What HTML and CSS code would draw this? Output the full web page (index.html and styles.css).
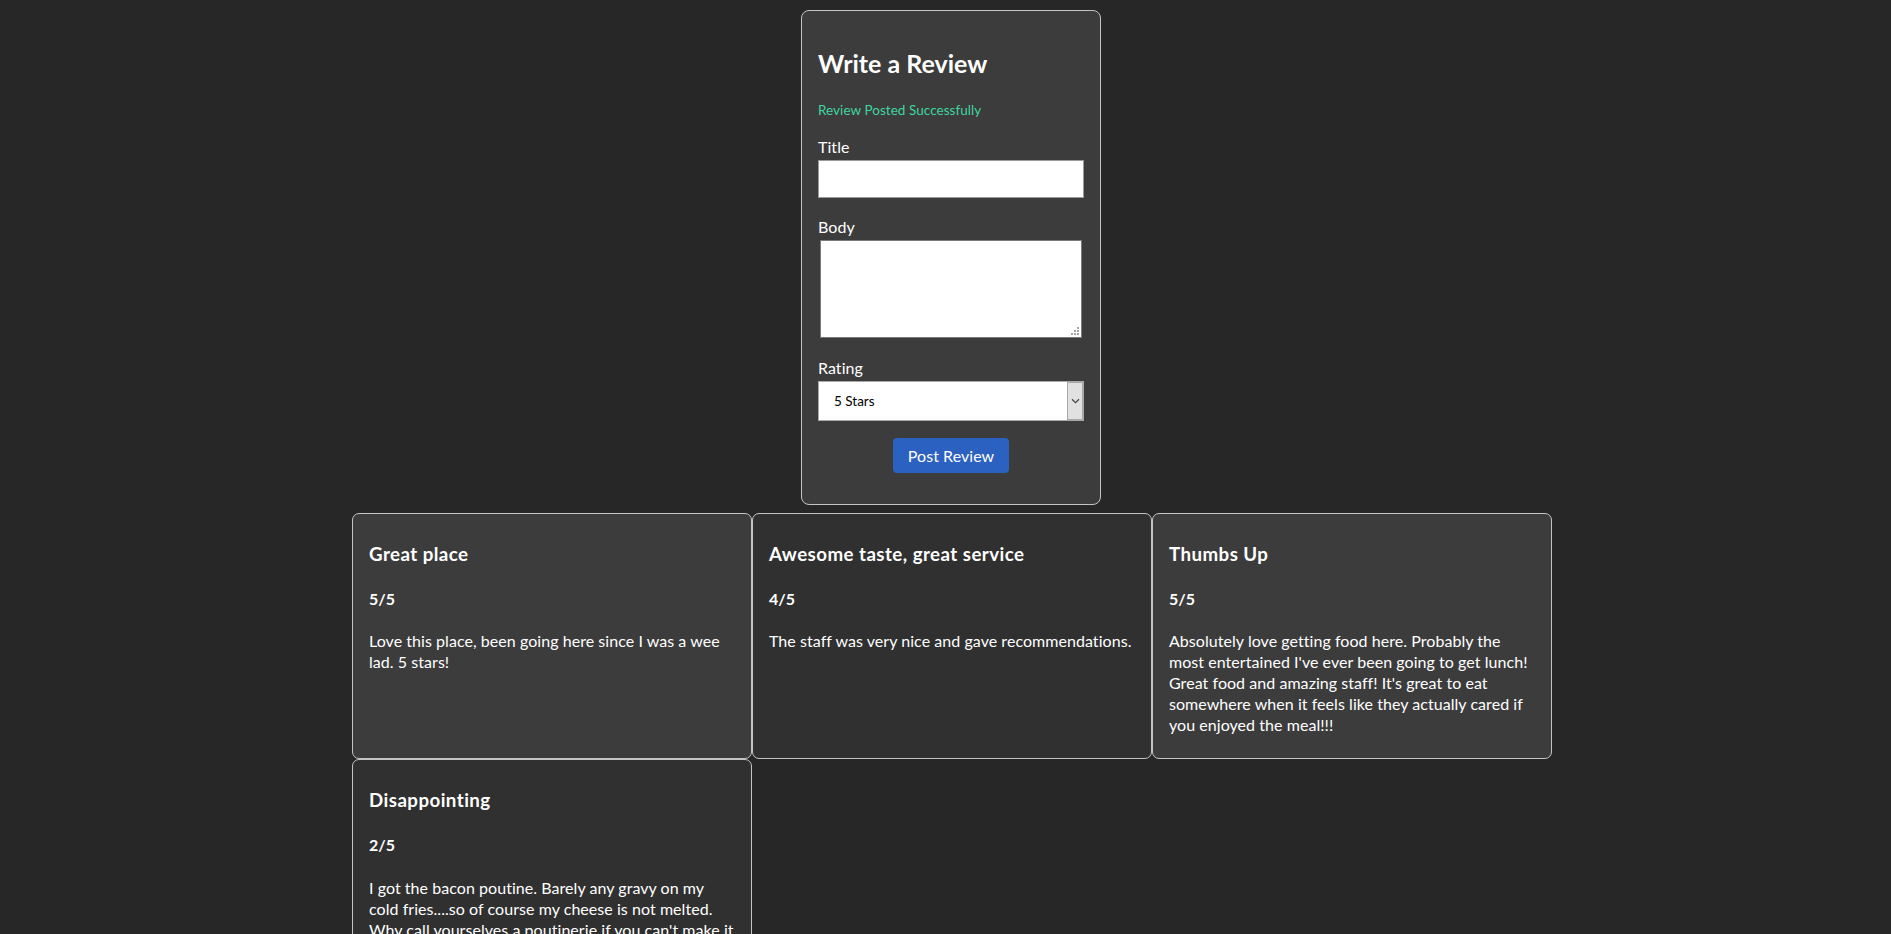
FILE: index.html
```html
<!DOCTYPE html>
<html lang="en">
<head>
<meta charset="utf-8">
<title>Reviews</title>
<link rel="stylesheet" href="styles.css">
</head>
<body>
<div class="page">
  <section class="review-form-card">
    <h2 class="form-title">Write a Review</h2>
    <p class="status">Review Posted Successfully</p>
    <form class="review-form">
      <label class="field-label" for="title">Title</label>
      <input class="text-input" id="title" type="text">
      <label class="field-label" for="body">Body</label>
      <div class="area-wrap">
        <textarea class="text-area" id="body"></textarea>
        <span class="grip"><svg width="8" height="8" viewBox="0 0 8 8"><rect x="6" y="0" width="2" height="2"/><rect x="3" y="3" width="2" height="2"/><rect x="6" y="3" width="2" height="2"/><rect x="0" y="6" width="2" height="2"/><rect x="3" y="6" width="2" height="2"/><rect x="6" y="6" width="2" height="2"/></svg></span>
      </div>
      <label class="field-label" for="rating">Rating</label>
      <div class="select-wrap">
        <select class="select" id="rating">
          <option>5 Stars</option>
          <option>4 Stars</option>
          <option>3 Stars</option>
          <option>2 Stars</option>
          <option>1 Star</option>
        </select>
        <span class="select-btn"><svg width="9" height="6" viewBox="0 0 9 6"><path d="M1 1.2 L4.5 4.6 L8 1.2" fill="none" stroke="#444" stroke-width="1.2"/></svg></span>
      </div>
      <div class="actions"><button class="post-btn" type="button">Post Review</button></div>
    </form>
  </section>

  <div class="reviews">
    <article class="review-card light">
      <h3 class="review-title">Great place</h3>
      <h4 class="review-rating">5/5</h4>
      <p class="review-body">Love this place, been going here since I was a wee lad. 5 stars!</p>
    </article>
    <article class="review-card dark">
      <h3 class="review-title">Awesome taste, great service</h3>
      <h4 class="review-rating">4/5</h4>
      <p class="review-body">The staff was very nice and gave recommendations.</p>
    </article>
    <article class="review-card light">
      <h3 class="review-title">Thumbs Up</h3>
      <h4 class="review-rating">5/5</h4>
      <p class="review-body">Absolutely love getting food here. Probably the most entertained I've ever been going to get lunch! Great food and amazing staff! It's great to eat somewhere when it feels like they actually cared if you enjoyed the meal!!!</p>
    </article>
    <article class="review-card dark">
      <h3 class="review-title">Disappointing</h3>
      <h4 class="review-rating">2/5</h4>
      <p class="review-body">I got the bacon poutine. Barely any gravy on my cold fries....so of course my cheese is not melted. Why call yourselves a poutinerie if you can't make it right? Won't be coming back.</p>
    </article>
  </div>
</div>
</body>
</html>
```
FILE: styles.css
```css
* { box-sizing: border-box; }

html, body {
  background: #272727;
}

body {
  margin: 0;
  font-family: "Lato", "Open Sans", sans-serif;
  font-size: 16px;
  line-height: 21px;
  color: #ffffff;
  letter-spacing: 0.05px;
}

.page {
  width: 1213px;
  margin: 0 auto;
  padding: 10px 0 0 13px;
  display: flex;
  flex-direction: column;
  align-items: center;
  gap: 8px;
}

.review-form-card {
  width: 300px;
  background: #3c3c3c;
  border: 1px solid #c4c4c4;
  border-radius: 8px;
  padding: 16px 16px 16px;
  margin-left: -2px;
}

.form-title {
  font-size: 25px;
  line-height: 32px;
  font-weight: 700;
  letter-spacing: 0;
  margin: 20px 0 22px;
}

.status {
  color: #3fd6a0;
  font-size: 13.5px;
  line-height: 18px;
  margin: 0 0 17px;
}

.review-form {
  display: flex;
  flex-direction: column;
}

.field-label {
  display: block;
  line-height: 21px;
  margin-bottom: 3px;
}

.text-input {
  display: block;
  width: 100%;
  height: 38px;
  border: 1px solid #9a9a9a;
  background: #fff;
  margin: 0 0 18px;
  font: inherit;
}

.area-wrap {
  position: relative;
  margin: 0 2px 19px;
  height: 98px;
}

.text-area {
  display: block;
  width: 100%;
  height: 98px;
  margin: 0;
  border: 1px solid #7a7a7a;
  background: #fff;
  font: inherit;
  resize: none;
}

.grip {
  position: absolute;
  right: 3px;
  bottom: 3px;
  width: 8px;
  height: 8px;
  display: flex;
  fill: #a6a6a6;
  pointer-events: none;
}

.select-wrap {
  position: relative;
  height: 40px;
  margin-bottom: 17px;
}

.select {
  appearance: none;
  -webkit-appearance: none;
  display: block;
  width: 100%;
  height: 40px;
  border: 1px solid #a9a9a9;
  border-radius: 0;
  background: #fff;
  color: #000;
  font-family: "Lato", sans-serif;
  font-size: 13.5px;
  padding: 0 0 0 15px;
  outline: none;
}

.select-btn {
  position: absolute;
  top: 1px;
  right: 1px;
  width: 16px;
  height: 38px;
  background: #e1e1e1;
  border: 1px solid #a8a8a8;
  display: flex;
  align-items: center;
  justify-content: center;
  pointer-events: none;
}

.actions {
  display: flex;
  justify-content: center;
  margin-bottom: 15px;
}

.post-btn {
  height: 35px;
  padding: 0 15px;
  background: #2b61c1;
  color: #fff;
  border: none;
  border-radius: 4px;
  font-family: "Lato", sans-serif;
  font-size: 16px;
  letter-spacing: 0.05px;
}

.reviews {
  width: 1200px;
  display: grid;
  grid-template-columns: repeat(3, 400px);
}

.review-card {
  border: 1px solid #c4c4c4;
  border-radius: 7px;
  padding: 9px 16px 7px;
}

.review-card.light { background: #3c3c3c; }
.review-card.dark { background: #303030; }

.review-title {
  font-size: 18.72px;
  line-height: 25px;
  font-weight: 700;
  letter-spacing: 0.45px;
  margin: 18.72px 0;
}

.review-rating {
  font-size: 16px;
  line-height: 21px;
  font-weight: 700;
  margin: 21.28px 0;
}

.review-body {
  margin: 16px 0;
}
```
